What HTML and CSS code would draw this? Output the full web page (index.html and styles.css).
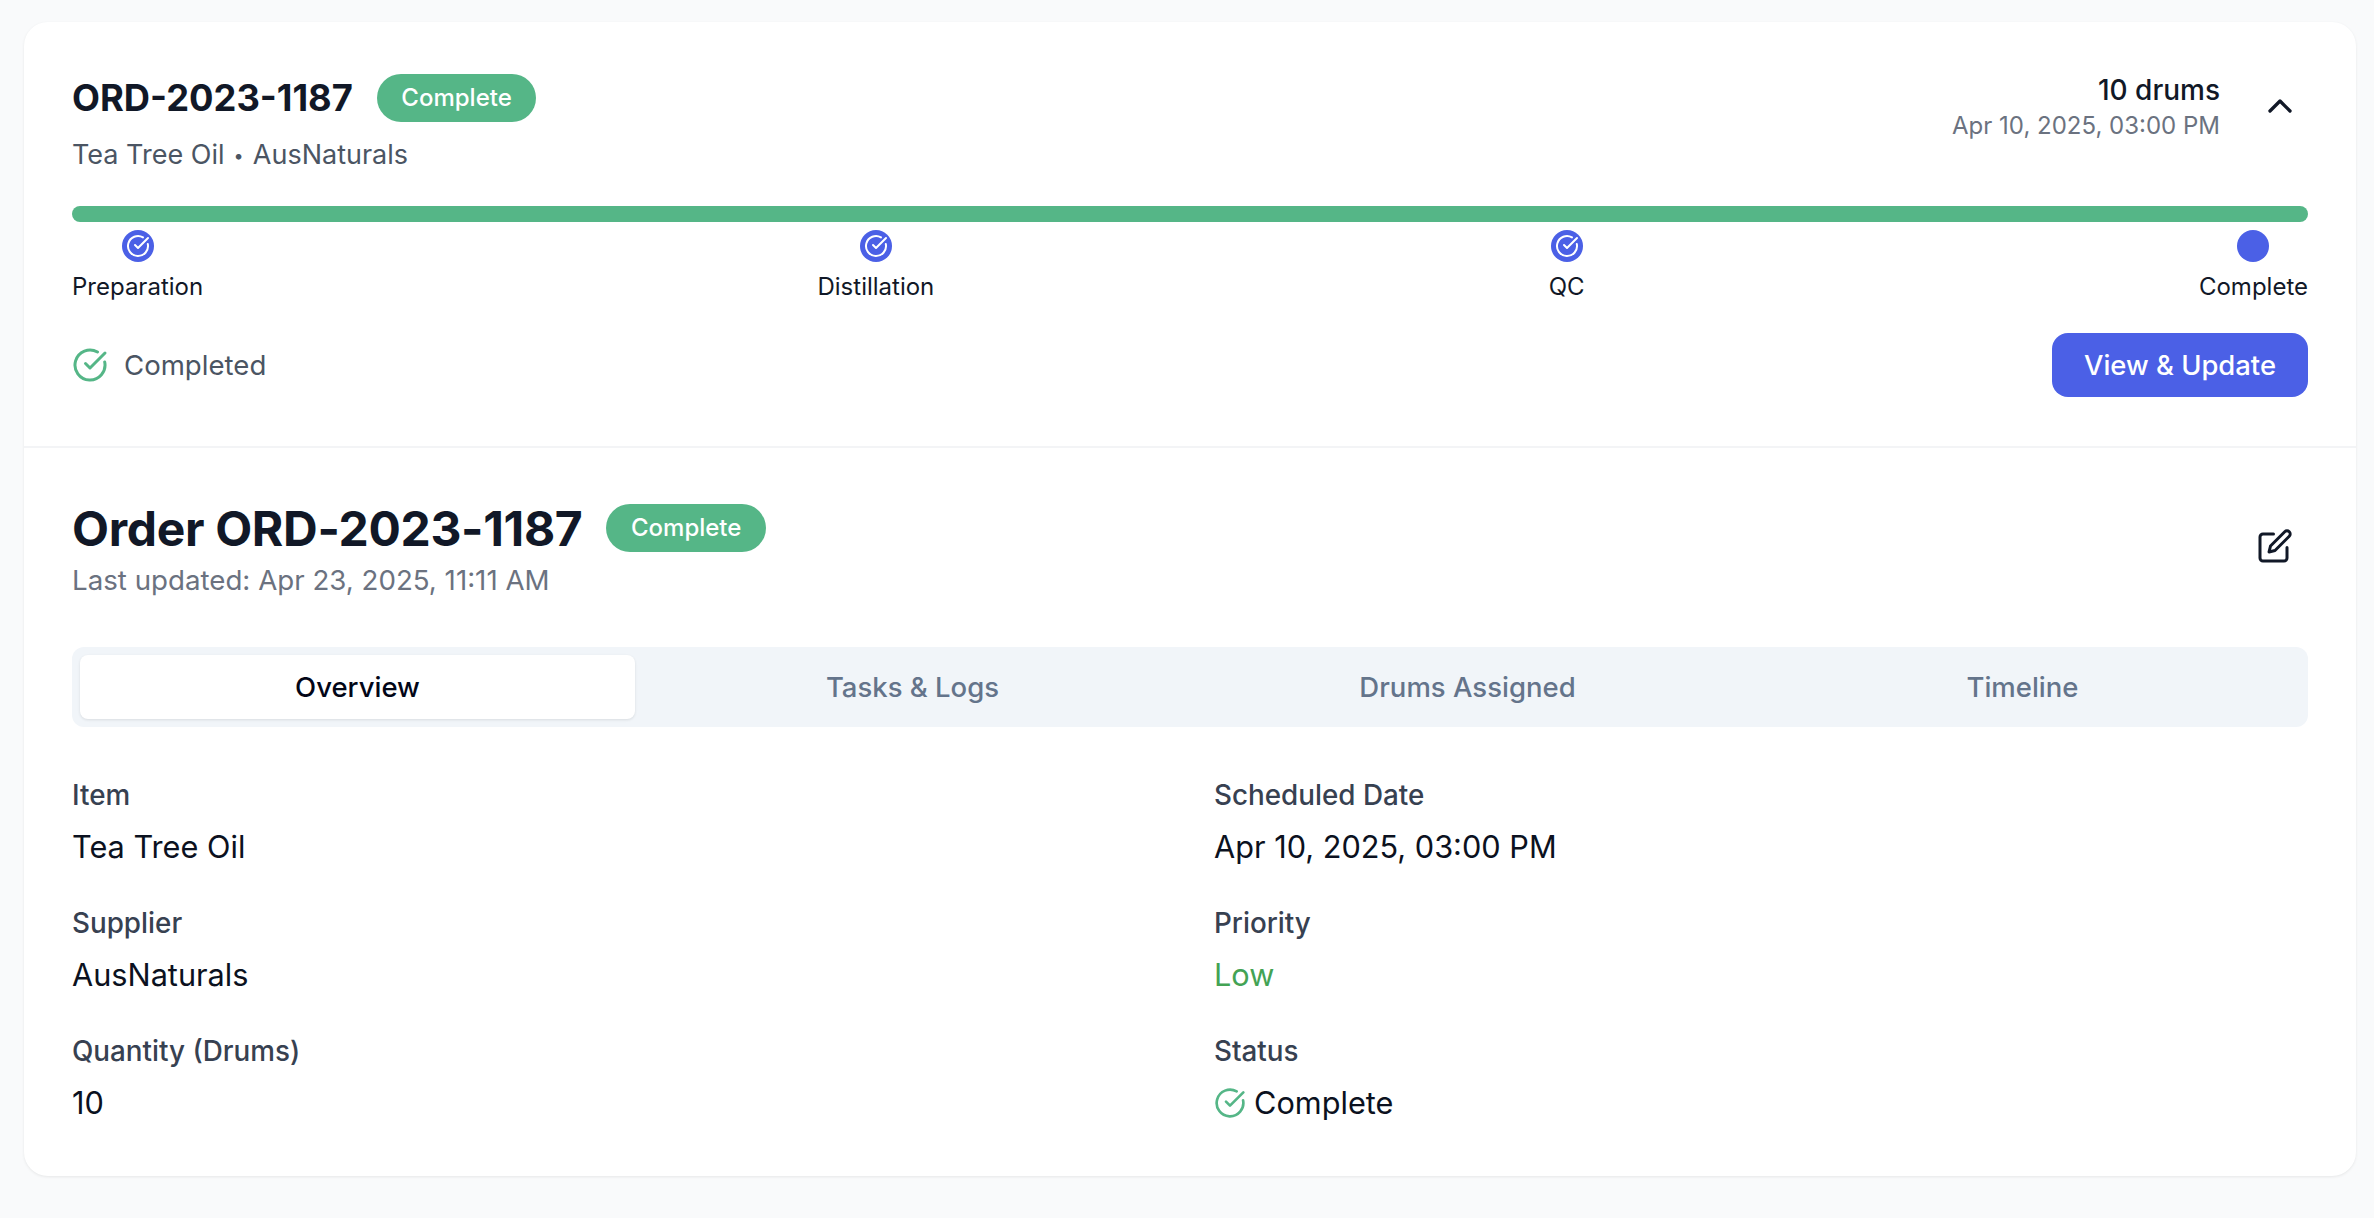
FILE: index.html
```html
<!DOCTYPE html>
<html lang="en">
<head>
  <meta charset="UTF-8" />
  <title>Order ORD-2023-1187</title>
  <link rel="stylesheet" href="styles.css">
</head>
<body>
  <div class="card">
    <section class="summary">
      <div class="summary-top">
        <div>
          <div class="title-row">
            <h3>ORD-2023-1187</h3>
            <span class="badge">Complete</span>
          </div>
          <p class="subtitle">Tea Tree Oil <span class="sep">•</span> AusNaturals</p>
        </div>
        <div class="summary-right">
          <div class="summary-meta">
            <div class="drums">10 drums</div>
            <div class="date">Apr 10, 2025, 03:00 PM</div>
          </div>
          <svg class="chevron" viewBox="0 0 24 24" fill="none" stroke="currentColor" stroke-width="2" stroke-linecap="round" stroke-linejoin="round"><path d="m18 15-6-6-6 6"/></svg>
        </div>
      </div>

      <div class="bar"></div>
      <div class="steps">
        <div class="step">
          <span class="dot"><svg viewBox="0 0 24 24" fill="none" stroke="#fff" stroke-width="2" stroke-linecap="round" stroke-linejoin="round"><path d="M21.801 10A10 10 0 1 1 17 3.335"/><path d="m9 11 3 3L22 4"/></svg></span>
          <span>Preparation</span>
        </div>
        <div class="step">
          <span class="dot"><svg viewBox="0 0 24 24" fill="none" stroke="#fff" stroke-width="2" stroke-linecap="round" stroke-linejoin="round"><path d="M21.801 10A10 10 0 1 1 17 3.335"/><path d="m9 11 3 3L22 4"/></svg></span>
          <span>Distillation</span>
        </div>
        <div class="step">
          <span class="dot"><svg viewBox="0 0 24 24" fill="none" stroke="#fff" stroke-width="2" stroke-linecap="round" stroke-linejoin="round"><path d="M21.801 10A10 10 0 1 1 17 3.335"/><path d="m9 11 3 3L22 4"/></svg></span>
          <span>QC</span>
        </div>
        <div class="step">
          <span class="dot"></span>
          <span>Complete</span>
        </div>
      </div>

      <div class="summary-bottom">
        <div class="completed">
          <svg viewBox="0 0 24 24" fill="none" stroke="#55b687" stroke-width="2" stroke-linecap="round" stroke-linejoin="round"><path d="M21.801 10A10 10 0 1 1 17 3.335"/><path d="m9 11 3 3L22 4"/></svg>
          <span>Completed</span>
        </div>
        <button class="primary">View &amp; Update</button>
      </div>
    </section>

    <section class="details">
      <div class="details-head">
        <div>
          <div class="title-row title-row-lg">
            <h2>Order ORD-2023-1187</h2>
            <span class="badge">Complete</span>
          </div>
          <p class="updated">Last updated: Apr 23, 2025, 11:11 AM</p>
        </div>
        <svg class="edit" viewBox="0 0 24 24" fill="none" stroke="currentColor" stroke-width="2" stroke-linecap="round" stroke-linejoin="round"><path d="M11 4H4a2 2 0 0 0-2 2v14a2 2 0 0 0 2 2h14a2 2 0 0 0 2-2v-7"/><path d="M18.5 2.5a2.121 2.121 0 0 1 3 3L12 15l-4 1 1-4 9.5-9.5z"/></svg>
      </div>

      <div class="tabs">
        <div class="tab active">Overview</div>
        <div class="tab">Tasks &amp; Logs</div>
        <div class="tab">Drums Assigned</div>
        <div class="tab">Timeline</div>
      </div>

      <div class="fields">
        <div class="field">
          <div class="label">Item</div>
          <div class="value">Tea Tree Oil</div>
        </div>
        <div class="field">
          <div class="label">Scheduled Date</div>
          <div class="value">Apr 10, 2025, 03:00 PM</div>
        </div>
        <div class="field">
          <div class="label">Supplier</div>
          <div class="value">AusNaturals</div>
        </div>
        <div class="field">
          <div class="label">Priority</div>
          <div class="value low">Low</div>
        </div>
        <div class="field">
          <div class="label">Quantity (Drums)</div>
          <div class="value">10</div>
        </div>
        <div class="field">
          <div class="label">Status</div>
          <div class="value status">
            <svg viewBox="0 0 24 24" fill="none" stroke="#55b687" stroke-width="2" stroke-linecap="round" stroke-linejoin="round"><path d="M21.801 10A10 10 0 1 1 17 3.335"/><path d="m9 11 3 3L22 4"/></svg>
            <span>Complete</span>
          </div>
        </div>
      </div>
    </section>
  </div>
</body>
</html>
```

FILE: styles.css
```css
* {
  box-sizing: border-box;
}

body {
  font-family: "Inter", sans-serif;
  background-color: #f9fafb;
  color: #111827;
  margin: 0;
  padding: 22px 18px 42px 24px;
}

h2, h3, p {
  margin: 0;
}

.card {
  background: white;
  height: 1154px;
  border-radius: 24px;
  box-shadow: 0 1px 3px rgba(0, 0, 0, 0.08);
}

.summary {
  padding: 52px 48px 0;
  height: 426px;
  border-bottom: 2px solid #f3f4f6;
}

.summary-top {
  display: flex;
  justify-content: space-between;
  height: 132px;
}

.title-row {
  display: flex;
  align-items: center;
  gap: 24px;
  height: 48px;
}

.title-row h3 {
  font-size: 36.3px;
  font-weight: 700;
}

.badge {
  background: #55b687;
  color: white;
  font-size: 24px;
  font-weight: 500;
  height: 48px;
  line-height: 48px;
  padding: 0 24.5px;
  border-radius: 24px;
}

.subtitle {
  font-size: 27px;
  color: #4b5563;
  margin-top: 16px;
}

.sep {
  font-size: 18px;
  vertical-align: 2px;
  margin: 0 1.5px;
}

.summary-right {
  display: flex;
  gap: 40px;
  margin-right: 8px;
}

.summary-meta {
  text-align: right;
  margin-top: -2px;
}

.drums {
  font-size: 28px;
  font-weight: 500;
  line-height: 36px;
}

.date {
  font-size: 24px;
  color: #6b7280;
  line-height: 36px;
}

.chevron {
  width: 40px;
  height: 40px;
  margin-top: 12px;
}

.bar {
  height: 16px;
  border-radius: 8px;
  background: #55b687;
}

.steps {
  display: flex;
  justify-content: space-between;
  margin-top: 8px;
}

.step {
  display: flex;
  flex-direction: column;
  align-items: center;
  gap: 7px;
  font-size: 24px;
  line-height: 36px;
}

.dot {
  width: 32px;
  height: 32px;
  border-radius: 50%;
  background: #4b60e6;
  display: flex;
  align-items: center;
  justify-content: center;
}

.dot svg {
  width: 24px;
  height: 24px;
}

.summary-bottom {
  display: flex;
  justify-content: space-between;
  align-items: center;
  margin-top: 28px;
}

.completed {
  display: flex;
  align-items: center;
  gap: 16px;
  font-size: 27.6px;
  color: #4b5563;
}

.completed svg {
  width: 36px;
  height: 36px;
}

.primary {
  font-family: inherit;
  font-size: 27.4px;
  font-weight: 500;
  background: #4b60e6;
  color: white;
  border: none;
  height: 64px;
  width: 256px;
  border-radius: 16px;
}

.details {
  padding: 56px 48px 0;
}

.details-head {
  display: flex;
  justify-content: space-between;
  align-items: center;
}

.title-row-lg h2 {
  font-size: 48px;
  font-weight: 700;
  letter-spacing: -0.32px;
}

.updated {
  font-size: 27.7px;
  color: #6b7280;
  margin-top: 11px;
}

.edit {
  width: 36px;
  height: 36px;
  margin-right: 15px;
  margin-bottom: 9px;
}

.tabs {
  display: grid;
  grid-template-columns: repeat(4, 1fr);
  background: #f1f5f9;
  padding: 8px;
  border-radius: 12px;
  margin-top: 50px;
}

.tab {
  height: 64px;
  line-height: 64px;
  text-align: center;
  font-size: 27.5px;
  font-weight: 500;
  color: #64748b;
  border-radius: 8px;
}

.tab.active {
  background: white;
  color: #020617;
  box-shadow: 0 1px 3px rgba(0, 0, 0, 0.1);
}

.fields {
  display: grid;
  grid-template-columns: 1fr 1fr;
  column-gap: 48px;
  row-gap: 32px;
  margin-top: 48px;
}

.label {
  font-size: 27.8px;
  font-weight: 500;
  color: #374151;
  line-height: 40px;
}

.value {
  font-size: 30.7px;
  line-height: 48px;
  margin-top: 8px;
  color: #0b1120;
}

.value.low {
  color: #43a354;
}

.status {
  display: flex;
  align-items: center;
  gap: 8px;
}

.status svg {
  width: 32px;
  height: 32px;
}
```
